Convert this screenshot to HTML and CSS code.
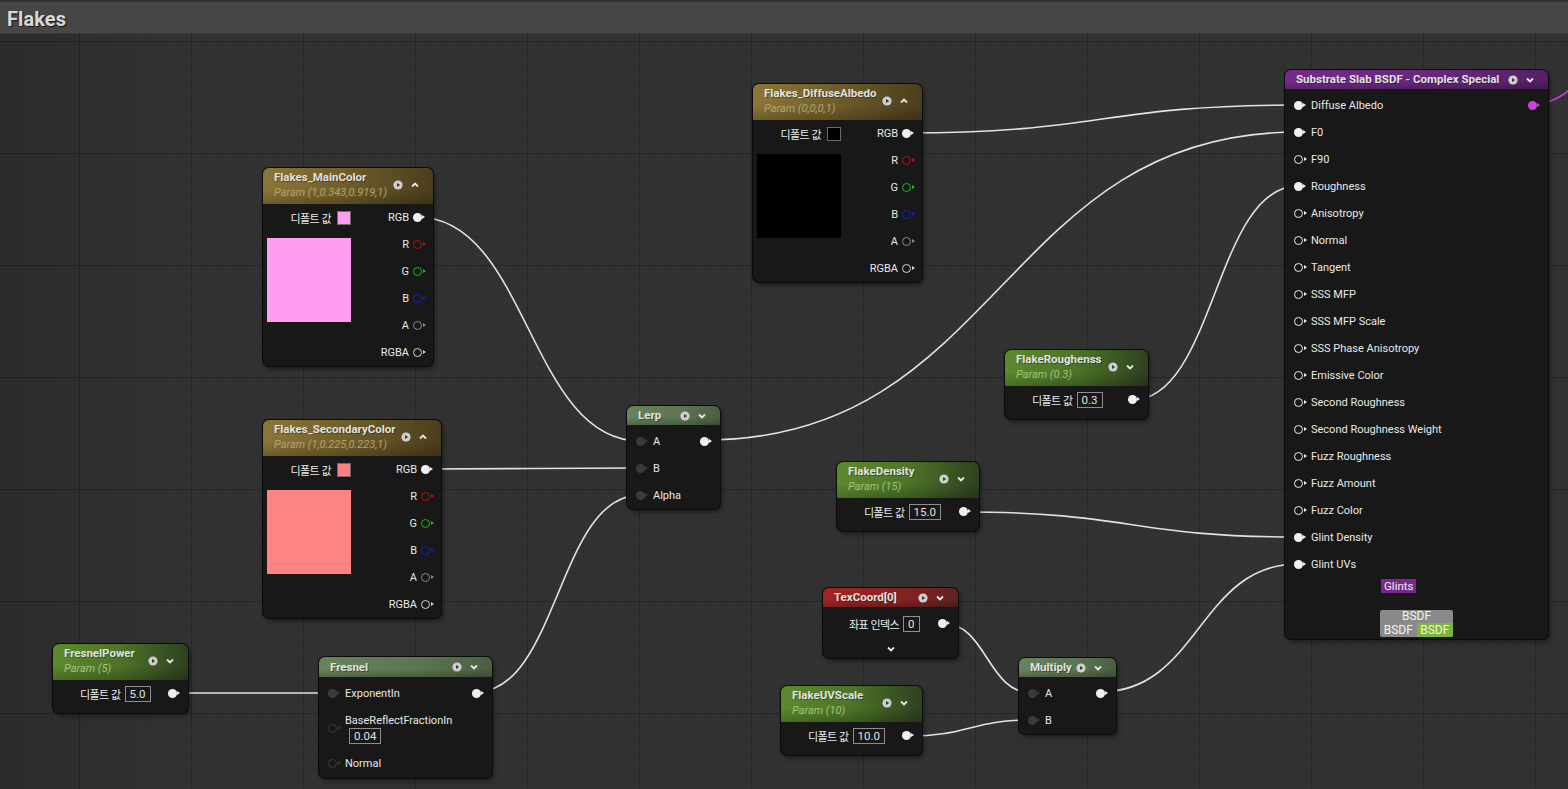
FILE: index.html
```html
<!DOCTYPE html>
<html lang="ko">
<head>
<meta charset="utf-8">
<title>Flakes</title>
<link rel="stylesheet" href="styles.css">
</head>
<body>
<div class="stage">
  <header class="titlebar"><h1>Flakes</h1></header>
  <main class="canvas">
    <svg class="wires" width="1568" height="789" viewBox="0 0 1568 789">
      <g fill="none" stroke="#e2e2e2" stroke-width="1.6">
        <path d="M906,133 C1102,133 1102,105 1298,105"/>
        <path d="M705,440 C1001,440 1002,132 1298,132"/>
        <path d="M1132,400 C1215,400 1215,186 1298,186"/>
        <path d="M963,512 C1130,512 1131,537 1298,537"/>
        <path d="M1100,692 C1199,692 1199,564 1298,564"/>
        <path d="M417,217 C528,217 529,441 640,441"/>
        <path d="M425,469 C532,469 533,468 640,468"/>
        <path d="M476,692 C558,692 558,495 640,495"/>
        <path d="M172,693 C252,693 252,693 332,693"/>
        <path d="M942,623 C987,623 987,693 1032,693"/>
        <path d="M907,736 C970,736 970,720 1032,720"/>
      </g>
      <path d="M1532,104 C1586,104 1586,40 1640,40" fill="none" stroke="#c43cd8" stroke-width="1.6"/>
    </svg>

    <!-- Flakes_DiffuseAlbedo -->
    <section class="node n-albedo">
      <div class="hdr two gold">
        <div class="ht"><div class="title">Flakes_DiffuseAlbedo</div><div class="sub">Param (0,0,0,1)</div></div>
        <div class="hicons"><svg class="ic" viewBox="0 0 10 10"><circle cx="5" cy="5" r="4.6" fill="#cfcfcf"/><path d="M4 2.9 L7.2 5 L4 7.1Z" fill="#3a3a3a"/></svg><svg class="ic" viewBox="0 0 10 10"><path d="M2 6.5 L5 3.5 L8 6.5" stroke="#e6e6e6" stroke-width="1.8" fill="none"/></svg></div>
      </div>
      <div class="vbody">
        <div class="vleft">
          <div class="defrow"><span class="ko">디폴트 값</span><span class="sw black"></span></div>
          <div class="bigsw black"></div>
        </div>
        <div class="outs">
          <div class="orow">RGB <i class="pin f w"></i></div>
          <div class="orow">R <i class="pin h r"></i></div>
          <div class="orow">G <i class="pin h g"></i></div>
          <div class="orow">B <i class="pin h b"></i></div>
          <div class="orow">A <i class="pin h a"></i></div>
          <div class="orow">RGBA <i class="pin h rgba"></i></div>
        </div>
      </div>
    </section>

    <!-- Flakes_MainColor -->
    <section class="node n-main">
      <div class="hdr two gold">
        <div class="ht"><div class="title">Flakes_MainColor</div><div class="sub">Param (1,0.343,0.919,1)</div></div>
        <div class="hicons"><svg class="ic" viewBox="0 0 10 10"><circle cx="5" cy="5" r="4.6" fill="#cfcfcf"/><path d="M4 2.9 L7.2 5 L4 7.1Z" fill="#3a3a3a"/></svg><svg class="ic" viewBox="0 0 10 10"><path d="M2 6.5 L5 3.5 L8 6.5" stroke="#e6e6e6" stroke-width="1.8" fill="none"/></svg></div>
      </div>
      <div class="vbody">
        <div class="vleft">
          <div class="defrow"><span class="ko">디폴트 값</span><span class="sw pink"></span></div>
          <div class="bigsw pink"></div>
        </div>
        <div class="outs">
          <div class="orow">RGB <i class="pin f w"></i></div>
          <div class="orow">R <i class="pin h r"></i></div>
          <div class="orow">G <i class="pin h g"></i></div>
          <div class="orow">B <i class="pin h b"></i></div>
          <div class="orow">A <i class="pin h a"></i></div>
          <div class="orow">RGBA <i class="pin h rgba"></i></div>
        </div>
      </div>
    </section>

    <!-- Flakes_SecondaryColor -->
    <section class="node n-second">
      <div class="hdr two gold">
        <div class="ht"><div class="title">Flakes_SecondaryColor</div><div class="sub">Param (1,0.225,0.223,1)</div></div>
        <div class="hicons"><svg class="ic" viewBox="0 0 10 10"><circle cx="5" cy="5" r="4.6" fill="#cfcfcf"/><path d="M4 2.9 L7.2 5 L4 7.1Z" fill="#3a3a3a"/></svg><svg class="ic" viewBox="0 0 10 10"><path d="M2 6.5 L5 3.5 L8 6.5" stroke="#e6e6e6" stroke-width="1.8" fill="none"/></svg></div>
      </div>
      <div class="vbody">
        <div class="vleft">
          <div class="defrow"><span class="ko">디폴트 값</span><span class="sw salmon"></span></div>
          <div class="bigsw salmon"></div>
        </div>
        <div class="outs">
          <div class="orow">RGB <i class="pin f w"></i></div>
          <div class="orow">R <i class="pin h r"></i></div>
          <div class="orow">G <i class="pin h g"></i></div>
          <div class="orow">B <i class="pin h b"></i></div>
          <div class="orow">A <i class="pin h a"></i></div>
          <div class="orow">RGBA <i class="pin h rgba"></i></div>
        </div>
      </div>
    </section>

    <!-- Lerp -->
    <section class="node n-lerp">
      <div class="hdr one expr">
        <div class="title">Lerp</div>
        <div class="hicons"><svg class="ic" viewBox="0 0 10 10"><circle cx="5" cy="5" r="4.6" fill="#cfcfcf"/><path d="M4 2.9 L7.2 5 L4 7.1Z" fill="#3a3a3a"/></svg><svg class="ic" viewBox="0 0 10 10"><path d="M2 3.5 L5 6.5 L8 3.5" stroke="#e6e6e6" stroke-width="1.8" fill="none"/></svg></div>
      </div>
      <div class="gbody">
        <div class="ins">
          <div class="irow"><i class="pin f dk"></i>A</div>
          <div class="irow"><i class="pin f dk"></i>B</div>
          <div class="irow"><i class="pin f dk"></i>Alpha</div>
        </div>
        <div class="outs"><div class="orow"><i class="pin f w"></i></div></div>
      </div>
    </section>

    <!-- FresnelPower -->
    <section class="node n-fpower">
      <div class="hdr two green">
        <div class="ht"><div class="title">FresnelPower</div><div class="sub">Param (5)</div></div>
        <div class="hicons"><svg class="ic" viewBox="0 0 10 10"><circle cx="5" cy="5" r="4.6" fill="#cfcfcf"/><path d="M4 2.9 L7.2 5 L4 7.1Z" fill="#3a3a3a"/></svg><svg class="ic" viewBox="0 0 10 10"><path d="M2 3.5 L5 6.5 L8 3.5" stroke="#e6e6e6" stroke-width="1.8" fill="none"/></svg></div>
      </div>
      <div class="sbody">
        <div class="srow"><span class="ko">디폴트 값</span><span class="val">5.0</span><i class="pin f w"></i></div>
      </div>
    </section>

    <!-- Fresnel -->
    <section class="node n-fresnel">
      <div class="hdr one expr">
        <div class="title">Fresnel</div>
        <div class="hicons"><svg class="ic" viewBox="0 0 10 10"><circle cx="5" cy="5" r="4.6" fill="#cfcfcf"/><path d="M4 2.9 L7.2 5 L4 7.1Z" fill="#3a3a3a"/></svg><svg class="ic" viewBox="0 0 10 10"><path d="M2 3.5 L5 6.5 L8 3.5" stroke="#e6e6e6" stroke-width="1.8" fill="none"/></svg></div>
      </div>
      <div class="gbody pb2">
        <div class="ins">
          <div class="irow"><i class="pin f dk"></i>ExponentIn</div>
          <div class="irow tall"><i class="pin h dk"></i><div class="lblock"><span>BaseReflectFractionIn</span><span class="val">0.04</span></div></div>
          <div class="irow"><i class="pin h dk"></i>Normal</div>
        </div>
        <div class="outs"><div class="orow"><i class="pin f w"></i></div></div>
      </div>
    </section>

    <!-- TexCoord[0] -->
    <section class="node n-texc">
      <div class="hdr one red">
        <div class="title">TexCoord[0]</div>
        <div class="hicons"><svg class="ic" viewBox="0 0 10 10"><circle cx="5" cy="5" r="4.6" fill="#cfcfcf"/><path d="M4 2.9 L7.2 5 L4 7.1Z" fill="#3a3a3a"/></svg><svg class="ic" viewBox="0 0 10 10"><path d="M2 3.5 L5 6.5 L8 3.5" stroke="#e6e6e6" stroke-width="1.8" fill="none"/></svg></div>
      </div>
      <div class="sbody tex">
        <div class="srow"><span class="ko">좌표 인덱스</span><span class="val">0</span><i class="pin f w"></i></div>
        <div class="more"><svg class="ic" viewBox="0 0 10 10"><path d="M2 3.5 L5 6.5 L8 3.5" stroke="#e6e6e6" stroke-width="1.8" fill="none"/></svg></div>
      </div>
    </section>

    <!-- FlakeUVScale -->
    <section class="node n-uvscale">
      <div class="hdr two green">
        <div class="ht"><div class="title">FlakeUVScale</div><div class="sub">Param (10)</div></div>
        <div class="hicons"><svg class="ic" viewBox="0 0 10 10"><circle cx="5" cy="5" r="4.6" fill="#cfcfcf"/><path d="M4 2.9 L7.2 5 L4 7.1Z" fill="#3a3a3a"/></svg><svg class="ic" viewBox="0 0 10 10"><path d="M2 3.5 L5 6.5 L8 3.5" stroke="#e6e6e6" stroke-width="1.8" fill="none"/></svg></div>
      </div>
      <div class="sbody">
        <div class="srow"><span class="ko">디폴트 값</span><span class="val">10.0</span><i class="pin f w"></i></div>
      </div>
    </section>

    <!-- Multiply -->
    <section class="node n-mult">
      <div class="hdr one expr">
        <div class="title">Multiply</div>
        <div class="hicons"><svg class="ic" viewBox="0 0 10 10"><circle cx="5" cy="5" r="4.6" fill="#cfcfcf"/><path d="M4 2.9 L7.2 5 L4 7.1Z" fill="#3a3a3a"/></svg><svg class="ic" viewBox="0 0 10 10"><path d="M2 3.5 L5 6.5 L8 3.5" stroke="#e6e6e6" stroke-width="1.8" fill="none"/></svg></div>
      </div>
      <div class="gbody">
        <div class="ins">
          <div class="irow"><i class="pin f dk"></i>A</div>
          <div class="irow"><i class="pin f dk"></i>B</div>
        </div>
        <div class="outs"><div class="orow"><i class="pin f w"></i></div></div>
      </div>
    </section>

    <!-- FlakeRoughenss -->
    <section class="node n-rough">
      <div class="hdr two green">
        <div class="ht"><div class="title">FlakeRoughenss</div><div class="sub">Param (0.3)</div></div>
        <div class="hicons"><svg class="ic" viewBox="0 0 10 10"><circle cx="5" cy="5" r="4.6" fill="#cfcfcf"/><path d="M4 2.9 L7.2 5 L4 7.1Z" fill="#3a3a3a"/></svg><svg class="ic" viewBox="0 0 10 10"><path d="M2 3.5 L5 6.5 L8 3.5" stroke="#e6e6e6" stroke-width="1.8" fill="none"/></svg></div>
      </div>
      <div class="sbody">
        <div class="srow"><span class="ko">디폴트 값</span><span class="val">0.3</span><i class="pin f w"></i></div>
      </div>
    </section>

    <!-- FlakeDensity -->
    <section class="node n-density">
      <div class="hdr two green">
        <div class="ht"><div class="title">FlakeDensity</div><div class="sub">Param (15)</div></div>
        <div class="hicons"><svg class="ic" viewBox="0 0 10 10"><circle cx="5" cy="5" r="4.6" fill="#cfcfcf"/><path d="M4 2.9 L7.2 5 L4 7.1Z" fill="#3a3a3a"/></svg><svg class="ic" viewBox="0 0 10 10"><path d="M2 3.5 L5 6.5 L8 3.5" stroke="#e6e6e6" stroke-width="1.8" fill="none"/></svg></div>
      </div>
      <div class="sbody">
        <div class="srow"><span class="ko">디폴트 값</span><span class="val">15.0</span><i class="pin f w"></i></div>
      </div>
    </section>

    <!-- Substrate Slab BSDF -->
    <section class="node n-slab">
      <div class="hdr one purple">
        <div class="title">Substrate Slab BSDF - Complex Special</div>
        <div class="hicons"><svg class="ic" viewBox="0 0 10 10"><circle cx="5" cy="5" r="4.6" fill="#cfcfcf"/><path d="M4 2.9 L7.2 5 L4 7.1Z" fill="#3a3a3a"/></svg><svg class="ic" viewBox="0 0 10 10"><path d="M2 3.5 L5 6.5 L8 3.5" stroke="#e6e6e6" stroke-width="1.8" fill="none"/></svg></div>
      </div>
      <div class="gbody">
        <div class="ins">
          <div class="irow"><i class="pin f w"></i>Diffuse Albedo</div>
          <div class="irow"><i class="pin f w"></i>F0</div>
          <div class="irow"><i class="pin h w"></i>F90</div>
          <div class="irow"><i class="pin f w"></i>Roughness</div>
          <div class="irow"><i class="pin h w"></i>Anisotropy</div>
          <div class="irow"><i class="pin h w"></i>Normal</div>
          <div class="irow"><i class="pin h w"></i>Tangent</div>
          <div class="irow"><i class="pin h w"></i>SSS MFP</div>
          <div class="irow"><i class="pin h w"></i>SSS MFP Scale</div>
          <div class="irow"><i class="pin h w"></i>SSS Phase Anisotropy</div>
          <div class="irow"><i class="pin h w"></i>Emissive Color</div>
          <div class="irow"><i class="pin h w"></i>Second Roughness</div>
          <div class="irow"><i class="pin h w"></i>Second Roughness Weight</div>
          <div class="irow"><i class="pin h w"></i>Fuzz Roughness</div>
          <div class="irow"><i class="pin h w"></i>Fuzz Amount</div>
          <div class="irow"><i class="pin h w"></i>Fuzz Color</div>
          <div class="irow"><i class="pin f w"></i>Glint Density</div>
          <div class="irow"><i class="pin f w"></i>Glint UVs</div>
        </div>
        <div class="outs"><div class="orow"><i class="pin f mg"></i></div></div>
      </div>
      <div class="slabfoot">
        <div class="footcol">
          <span class="tag-glints">Glints</span>
          <div class="bsdf">
            <div class="bsdf-top">BSDF</div>
            <div class="bsdf-bot"><span>BSDF</span><span class="bsdf-green">BSDF</span></div>
          </div>
        </div>
      </div>
    </section>
  </main>
</div>
</body>
</html>
```

FILE: styles.css
```css
html, body {
  margin: 0;
  padding: 0;
  background: #313131;
}

.stage {
  position: relative;
  width: 1568px;
  height: 789px;
  overflow: hidden;
  font-family: Roboto, "Noto Sans CJK KR", sans-serif;
}

.titlebar {
  height: 31px;
  background: #464646;
  border-top: 2px solid #303030;
  border-bottom: 1px solid #3b3b3b;
  display: flex;
  align-items: center;
  padding-left: 7px;
}

.titlebar h1 {
  margin: 0;
  font-size: 20px;
  font-weight: 700;
  color: #d9d9d9;
  text-shadow: 1px 1px 1px #161616;
  letter-spacing: 0.1px;
  padding-top: 3px;
}

.canvas {
  display: block;
  height: 755px;
  background-color: #323232;
  background-image:
    linear-gradient(to right, rgba(0, 0, 0, 0.14), rgba(0, 0, 0, 0) 170px),
    linear-gradient(to right, #262626 1px, transparent 1px),
    linear-gradient(to bottom, #262626 1px, transparent 1px),
    linear-gradient(to right, #2f2f2f 1px, transparent 1px),
    linear-gradient(to bottom, #2f2f2f 1px, transparent 1px);
  background-size: 100% 100%, 112px 112px, 112px 112px, 14px 14px, 14px 14px;
  background-position: 0 0, 79px 0, 0 7px, 9px 0, 0 7px;
}

.wires {
  position: absolute;
  left: 0;
  top: 0;
  z-index: 0;
}

/* ---------- nodes ---------- */
.node {
  position: absolute;
  z-index: 1;
  background: #171817;
  border-radius: 6px;
  box-shadow: 0 0 0 1px #0b0b0b, 2px 3px 5px rgba(0, 0, 0, 0.45);
  color: #e8e8e8;
  font-size: 11px;
  overflow: hidden;
}

.n-albedo  { left: 753px;  top: 84px;  width: 169px; }
.n-main    { left: 263px;  top: 168px; width: 170px; }
.n-second  { left: 263px;  top: 420px; width: 178px; }
.n-lerp    { left: 627px;  top: 406px; width: 93px; }
.n-fpower  { left: 53px;   top: 644px; width: 135px; }
.n-fresnel { left: 319px;  top: 657px; width: 173px; }
.n-texc    { left: 823px;  top: 588px; width: 135px; }
.n-uvscale { left: 781px;  top: 686px; width: 141px; }
.n-mult    { left: 1019px; top: 658px; width: 97px; }
.n-rough   { left: 1005px; top: 350px; width: 143px; }
.n-density { left: 837px;  top: 462px; width: 142px; }
.n-slab    { left: 1285px; top: 70px;  width: 263px; }

/* header */
.hdr {
  display: flex;
  align-items: center;
  justify-content: space-between;
  gap: 4px;
  padding: 0 13px 0 11px;
  box-sizing: border-box;
  position: relative;
}
.hdr::after {
  content: "";
  position: absolute;
  left: 0; right: 0; bottom: 0;
  height: 40%;
  background: linear-gradient(to bottom, rgba(0, 0, 0, 0), rgba(0, 0, 0, 0.22));
  pointer-events: none;
}
.hdr.two { height: 36px; align-items: flex-start; }
.hdr.one { height: 19px; }
.n-fresnel .hdr.one { height: 20px; }

.title {
  font-size: 11.5px;
  font-weight: 700;
  line-height: 16px;
  color: #e0e0e0;
  white-space: nowrap;
  text-shadow: 1px 1px 0 rgba(0, 0, 0, 0.35);
  position: relative;
  z-index: 1;
  min-width: 0;
}
.hdr.one .title { line-height: 19px; }
.ht { position: relative; z-index: 1; padding-top: 1px; min-width: 0; }
.sub {
  font-size: 11px;
  font-style: italic;
  line-height: 16px;
  white-space: nowrap;
}

.hicons {
  display: flex;
  align-items: center;
  gap: 7px;
  position: relative;
  z-index: 1;
  flex: none;
}
.hdr.two .hicons { margin-top: 12px; }
.ic { width: 10px; height: 10px; display: block; }

.gold   { background: linear-gradient(to right, #8c7637 0%, #72602a 45%, #4a3e1d 100%); }
.gold .sub { color: #b3a26c; }
.green  { background: linear-gradient(to right, #5c8a2d 0%, #4d7427 50%, #2e4120 100%); }
.green .sub { color: #a3c27b; }
.expr   { background: linear-gradient(to right, #68845d 0%, #5a7551 60%, #4a5f44 100%); }
.red    { background: linear-gradient(to right, #a42424 0%, #8a2222 55%, #5e2323 100%); }
.purple { background: linear-gradient(to right, #742a8a 0%, #66287b 60%, #532065 100%); }

/* pins */
.pin {
  position: relative;
  display: block;
  width: 9px;
  height: 9px;
  border-radius: 50%;
  box-sizing: border-box;
  flex: none;
  margin-right: 3px;
}
.pin::after {
  content: "";
  position: absolute;
  top: 50%;
  margin-top: -2.5px;
  border-left: 3px solid var(--c);
  border-top: 2.5px solid transparent;
  border-bottom: 2.5px solid transparent;
}
.pin.f { background: var(--c); }
.pin.f::after { right: -3px; }
.pin.h { border: 1.7px solid var(--c); }
.pin.h::after { right: -4.7px; }

.w    { --c: #f0f0f0; }
.r    { --c: #c80c0c; }
.g    { --c: #14c214; }
.b    { --c: #1a1ad6; }
.a    { --c: #8a8a8a; }
.rgba { --c: #d4d4d4; }
.dk   { --c: #3b3b3b; }
.mg   { --c: #cf3ee4; }

/* vector param body */
.vbody {
  display: flex;
}
.vleft {
  width: 88px;
  padding-left: 4px;
  box-sizing: border-box;
  flex: none;
}
.defrow {
  height: 27px;
  display: flex;
  align-items: center;
  justify-content: flex-end;
  gap: 6px;
}
.ko {
  font-family: "Noto Sans CJK KR", Roboto, sans-serif;
  font-size: 11px;
  letter-spacing: -0.6px;
  color: #ececec;
  white-space: nowrap;
}
.sw {
  width: 14px;
  height: 14px;
  box-sizing: border-box;
  border: 1px solid #6b6b6b;
}
.bigsw {
  width: 84px;
  height: 84px;
  margin-top: 7px;
}
.pink   { background-color: #ff9df3; }
.salmon { background-color: #ff8383; }
.black  { background-color: #000; }

.outs {
  flex: 1;
  padding-right: 8px;
}
.orow {
  height: 27px;
  display: flex;
  align-items: center;
  justify-content: flex-end;
  gap: 4px;
  white-space: nowrap;
}

/* generic in/out body */
.gbody {
  display: flex;
  padding-top: 3px;
}
.gbody.pb2 { padding-bottom: 1px; }
.ins {
  padding-left: 9px;
}
.irow {
  height: 27px;
  display: flex;
  align-items: center;
  gap: 5px;
  white-space: nowrap;
}
.irow.tall { height: 43px; }
.lblock {
  display: flex;
  flex-direction: column;
  align-items: flex-start;
  gap: 1px;
}
.lblock .val { margin-left: 4px; }

/* scalar param body */
.sbody {
  padding: 0 8px 6px 27px;
}
.sbody.tex { padding: 3px 8px 0 26px; }
.srow {
  height: 27px;
  display: flex;
  align-items: center;
}
.srow .ko { margin-right: 4px; }
.srow .pin { margin-left: auto; }
.val {
  display: inline-block;
  height: 16px;
  line-height: 14px;
  box-sizing: border-box;
  border: 1px solid #8e8e8e;
  padding: 0 4px;
  font-size: 11.5px;
  color: #e2e2e2;
}
.more {
  height: 21px;
  display: flex;
  justify-content: center;
  align-items: flex-start;
  padding-top: 7px;
  margin-left: -18px;
  box-sizing: border-box;
}

/* substrate footer */
.slabfoot {
  display: flex;
  justify-content: center;
  padding: 1px 0 2px;
}
.footcol {
  display: flex;
  flex-direction: column;
  align-items: flex-start;
  gap: 17px;
}
.tag-glints {
  display: block;
  height: 14px;
  line-height: 14px;
  padding: 0 3px;
  margin-left: 1px;
  background: #7a278c;
  color: #ececec;
  font-size: 11.5px;
}
.bsdf {
  width: 73px;
  background: #8a8a8a;
  border-radius: 2px;
  color: #f2f2f2;
  font-size: 12px;
  overflow: hidden;
}
.bsdf-top {
  height: 13px;
  line-height: 13px;
  text-align: center;
}
.bsdf-bot {
  display: flex;
  height: 14px;
  line-height: 14px;
}
.bsdf-bot span {
  flex: 1;
  text-align: center;
}
.bsdf-bot .bsdf-green {
  background: #7cb53a;
  border-radius: 2px 0 0 0;
}
```
